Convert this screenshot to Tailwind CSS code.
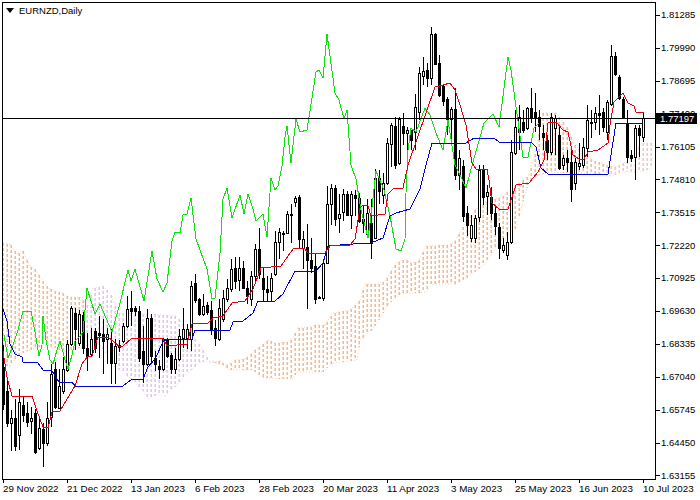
<!DOCTYPE html>
<html lang="en">
<head>
  <meta charset="UTF-8">
  <title>EURNZD, Daily</title>
  <script src="https://cdn.jsdelivr.net/npm/@tailwindcss/browser@4"></script>
</head>
<body class="bg-white">
  <div class="w-[700px] h-[500px] overflow-hidden bg-white text-black text-[9.5px] font-['Liberation_Sans',sans-serif]">
    <div class="flex pl-[2px] pt-[2px]">
      <!-- chart pane -->
      <div class="relative w-[654px] h-[478px] border border-black">
        <svg id="chart" class="block" width="652" height="476" viewBox="3 3 652 476"></svg>
        <div class="absolute left-[3px] top-[2px] flex items-center gap-[5px]">
          <span class="w-0 h-0 border-x-[4px] border-x-transparent border-t-[5px] border-t-black"></span>
          <span class="leading-[11px]">EURNZD,Daily</span>
        </div>
      </div>
      <!-- price axis -->
      <div class="relative w-[44px] h-[478px]">
        <div id="prices" class="flex flex-col mt-[-3px]"></div>
        <div class="absolute left-0 top-[111px] w-[41px] h-[11px] bg-black text-white pl-[4px] leading-[11px]">1.77197</div>
      </div>
    </div>
    <!-- date axis -->
    <div id="dates" class="flex pl-[3px] text-[9.8px]"></div>
  </div>

  <script>
    // candles: [x, high, bodyTop, bodyBottom, low, black]
    const candles = [
      [3,345,367,404,410,1],[7,380,391,423,427,1],[11,410,418,423,451,0],[15,399,418,446,451,1],[19,389,402,435,450,0],
      [23,396,405,415,422,1],[27,402,413,422,427,1],[31,407,418,421,434,0],[35,409,413,452,454,1],[39,418,428,448,450,0],
      [43,423,429,443,467,1],[47,402,418,443,446,0],[51,364,374,417,427,0],[55,362,369,407,409,1],[59,369,386,408,409,0],
      [63,357,369,391,394,0],[67,340,344,370,372,0],[71,306,308,344,346,0],[75,308,313,329,350,1],[79,310,314,343,346,0],
      [83,312,315,348,354,1],[87,333,348,356,371,1],[91,328,339,354,356,0],[95,328,331,348,353,1],[99,316,333,335,358,1],
      [103,319,334,341,374,1],[107,328,334,339,364,0],[111,329,343,363,384,1],[115,339,346,363,384,0],[119,340,345,347,352,0],
      [123,323,326,341,343,0],[127,296,309,326,328,0],[131,291,308,311,326,1],[135,306,308,311,316,1],[139,306,311,358,362,1],
      [143,326,351,364,383,1],[147,309,318,364,366,0],[151,314,318,356,362,1],[155,351,358,364,371,1],[159,360,366,369,379,1],
      [163,338,339,369,371,0],[167,338,339,356,358,1],[171,353,355,369,374,1],[175,348,359,369,374,0],[179,329,336,359,361,0],
      [183,308,329,338,348,0],[187,324,329,338,349,0],[191,281,286,339,351,0],[195,274,283,300,303,1],[199,298,299,314,316,1],
      [203,294,306,314,316,0],[207,302,305,312,315,1],[211,301,310,329,335,1],[215,320,328,338,346,1],[219,299,308,339,341,0],
      [223,290,298,319,322,0],[227,279,288,299,302,0],[231,259,269,289,292,0],[235,257,268,281,289,1],[239,257,268,280,291,0],
      [243,261,268,288,289,1],[247,281,288,296,304,1],[251,271,276,299,306,0],[255,244,249,276,281,0],[259,228,249,274,279,1],
      [263,268,278,289,301,1],[267,276,289,292,301,1],[271,273,278,291,301,0],[275,231,242,274,276,0],[279,228,232,242,259,0],
      [283,231,233,234,251,1],[287,211,214,233,234,0],[291,204,214,215,243,0],[295,196,198,202,207,0],[299,195,197,239,248,1],
      [303,231,239,248,269,0],[307,224,247,260,309,1],[311,238,260,268,273,1],[315,254,266,299,304,1],[319,296,297,298,299,1],
      [323,259,263,298,301,0],[327,186,204,263,264,0],[331,184,188,204,225,0],[335,185,188,219,226,1],[339,194,214,218,233,0],
      [343,189,194,212,221,0],[347,191,194,215,216,1],[351,191,194,215,229,0],[355,190,195,198,216,1],[359,193,198,221,223,1],
      [363,205,219,223,233,1],[367,199,213,234,238,0],[371,199,223,243,259,1],[375,169,178,238,239,0],[379,170,178,191,204,1],
      [383,173,183,195,204,0],[387,138,143,183,185,0],[391,123,125,144,167,0],[395,117,126,165,169,1],[399,117,119,163,165,0],
      [403,113,126,133,145,1],[407,127,130,133,165,0],[411,130,130,140,150,1],[415,94,107,132,150,0],[419,67,73,112,120,0],
      [423,57,71,76,85,0],[427,63,70,78,87,1],[431,27,34,78,85,0],[435,33,34,64,65,1],[439,55,63,95,97,1],
      [443,85,86,101,106,1],[447,97,99,119,135,1],[451,107,109,119,140,0],[455,88,109,175,180,1],[459,150,158,175,190,0],
      [463,160,166,216,222,1],[467,206,213,225,236,1],[471,215,225,238,242,0],[475,215,218,238,243,0],[479,165,170,217,222,0],
      [483,165,170,197,205,1],[487,185,192,196,215,0],[491,187,197,213,220,1],[495,205,213,226,235,1],[499,223,227,248,259,1],
      [503,238,245,250,253,0],[507,232,242,255,260,0],[511,140,152,242,244,0],[515,110,127,153,155,0],[519,105,117,132,150,0],
      [523,110,122,130,133,1],[527,107,108,128,130,0],[531,88,108,118,123,1],[535,93,112,117,132,1],[539,110,117,126,140,1],
      [543,125,133,137,150,1],[547,135,140,152,160,1],[551,113,117,152,155,0],[555,115,118,128,155,0],[559,125,135,168,170,1],
      [563,155,158,165,170,0],[567,150,158,162,172,1],[571,150,162,189,202,1],[575,158,162,183,190,0],[579,143,163,166,170,0],
      [583,138,147,165,168,0],[587,105,120,148,157,0],[591,110,122,123,138,0],[595,107,113,122,130,0],[599,95,113,115,135,1],
      [603,108,112,127,132,1],[607,100,102,132,140,0],[611,45,56,104,106,0],[615,52,56,74,76,1],[619,75,77,98,100,1],
      [623,97,99,117,119,1],[627,110,123,157,163,1],[631,150,155,158,162,1],[635,125,128,157,180,0],[639,125,128,135,157,1],
      [643,112,118,137,142,0]
    ];

    const green = [[4,335],[8,358],[12,348],[18,330],[23,311],[31,311],[35,332],[39,356],[42,345],[43,316],[46,340],[50,360],[53,364],[57,350],[60,341],[65,360],[68,369],[72,355],[75,341],[80,336],[83,332],[87,288],[95,314],[100,304],[112,332],[120,303],[128,270],[131,281],[135,269],[144,301],[152,251],[157,279],[163,292],[167,283],[172,241],[175,232],[180,233],[183,215],[187,214],[191,198],[196,239],[207,269],[212,299],[215,298],[220,253],[223,199],[227,188],[232,218],[240,195],[244,214],[248,194],[253,209],[256,221],[263,214],[267,237],[271,178],[275,190],[278,186],[282,166],[285,137],[287,126],[291,163],[296,119],[300,132],[307,130],[316,72],[319,70],[323,78],[327,34],[335,93],[339,100],[344,119],[347,110],[351,165],[356,179],[361,210],[368,238],[371,216],[376,171],[384,190],[390,216],[396,249],[401,251],[405,239],[406,193],[408,150],[411,128],[416,132],[425,108],[430,115],[436,133],[443,150],[448,120],[455,165],[460,175],[466,188],[473,162],[484,123],[493,114],[499,127],[508,57],[511,70],[516,107],[523,157],[528,157],[534,128],[539,123]];

    const red = [[3,351],[7,377],[12,396],[32,396],[37,411],[43,427],[48,428],[52,412],[60,411],[75,386],[82,364],[87,357],[92,356],[98,337],[108,337],[120,347],[123,346],[132,338],[163,339],[167,346],[187,344],[192,324],[208,323],[213,318],[223,316],[232,303],[245,301],[253,289],[261,268],[281,266],[293,249],[298,248],[305,249],[308,253],[325,253],[330,246],[350,245],[355,239],[360,208],[363,205],[368,206],[371,216],[385,214],[388,194],[393,189],[403,188],[408,165],[426,113],[435,87],[443,85],[450,83],[455,90],[460,105],[466,125],[472,163],[476,169],[487,169],[489,180],[492,203],[499,209],[508,209],[516,185],[529,183],[538,172],[544,160],[548,123],[556,122],[563,130],[568,132],[573,155],[579,159],[584,159],[588,152],[598,150],[608,143],[610,125],[614,102],[623,93],[628,103],[634,106],[636,112],[644,113]];

    const blue = [[3,309],[7,321],[10,344],[15,354],[22,357],[23,362],[38,363],[43,370],[52,371],[59,382],[72,382],[75,386],[123,386],[132,379],[143,379],[148,367],[155,359],[163,342],[167,339],[192,339],[195,330],[230,330],[233,322],[243,321],[253,313],[258,301],[275,301],[283,294],[295,271],[316,271],[323,263],[328,246],[353,244],[371,243],[383,238],[390,216],[396,213],[410,209],[420,189],[426,165],[432,143],[466,143],[474,138],[494,138],[499,142],[531,142],[536,147],[541,168],[548,174],[608,174],[616,123],[643,123]];

    const cloudTop = [[3,243],[10,244],[17,254],[23,251],[30,266],[35,269],[45,284],[50,289],[63,293],[68,297],[80,297],[88,306],[93,288],[103,286],[112,296],[117,313],[148,314],[177,316],[187,329],[200,345],[210,362],[220,361],[227,365],[235,360],[245,359],[255,350],[268,340],[275,343],[290,342],[298,328],[310,327],[315,325],[325,325],[333,313],[350,310],[360,300],[365,284],[380,284],[385,281],[396,263],[406,259],[410,263],[418,262],[426,246],[450,245],[455,241],[465,223],[475,210],[490,200],[500,198],[516,185],[529,175],[536,150],[543,113],[556,113],[568,128],[573,143],[585,155],[593,160],[606,165],[616,167],[633,158],[641,143],[652,143]];
    const cloudBottom = [[3,365],[10,366],[18,355],[30,350],[45,345],[60,350],[75,350],[88,345],[100,345],[115,367],[130,378],[143,391],[148,399],[158,394],[165,396],[180,382],[190,371],[200,362],[213,362],[223,365],[230,370],[253,370],[263,378],[292,379],[297,372],[323,372],[333,363],[357,360],[360,340],[372,330],[380,318],[388,304],[400,294],[426,292],[433,284],[455,284],[465,279],[475,272],[486,263],[499,243],[516,228],[526,190],[534,177],[548,172],[600,174],[610,176],[625,172],[640,172],[652,168]];

    function yAt(points, x) {
      for (let i = 1; i < points.length; i++) {
        if (x <= points[i][0]) {
          const [x0, y0] = points[i - 1];
          const [x1, y1] = points[i];
          return y0 + (y1 - y0) * (x - x0) / (x1 - x0);
        }
      }
      return points[points.length - 1][1];
    }

    function polyline(points, color, extra = '') {
      const pts = points.map(p => p.join(',')).join(' ');
      return `<polyline points="${pts}" fill="none" stroke="${color}" stroke-width="1" ${extra}/>`;
    }

    function cloudColor(x) {
      if (x > 86 && x < 210) return '#dcc4e4';
      if (x > 606) return '#eec4c4';
      return '#f2b488';
    }

    let svg = '';

    // cloud hatching, one dashed column per bar, a bit over a pixel wide so the tint survives the photograph
    for (let x = 3; x <= 652; x += 4) {
      const top = Math.round(yAt(cloudTop, x));
      const bottom = Math.round(yAt(cloudBottom, x));
      svg += `<line x1="${x + 0.2}" x2="${x + 0.2}" y1="${top}" y2="${bottom}" stroke="${cloudColor(x)}" stroke-width="1.4" stroke-dasharray="3 2"/>`;
    }
    [cloudTop, cloudBottom].forEach(edge => {
      for (let i = 1; i < edge.length; i++) {
        const seg = [edge[i - 1], edge[i]];
        svg += polyline(seg, cloudColor(seg[0][0]), 'stroke-dasharray="1 2" stroke-opacity="0.6"');
      }
    });

    candles.forEach(([x, high, top, bottom, low, black]) => {
      svg += `<line x1="${x + 0.5}" x2="${x + 0.5}" y1="${high}" y2="${low}" stroke="#000"/>`;
      svg += `<rect x="${x - 0.5}" y="${top + 0.5}" width="2" height="${Math.max(bottom - top, 1)}" fill="${black ? '#000' : '#fff'}" stroke="#000"/>`;
    });

    svg += polyline(green, '#10e010', 'shape-rendering="crispEdges"');
    svg += polyline(blue, '#0000d8', 'shape-rendering="crispEdges"');
    svg += polyline(red, '#e00010', 'shape-rendering="crispEdges"');
    svg += '<line x1="3" x2="655" y1="118.5" y2="118.5" stroke="#000"/>';
    document.getElementById('chart').innerHTML = svg;

    const prices = ['1.81285', '1.79990', '1.78695', '1.77400', '1.76105', '1.74810', '1.73515', '1.72220', '1.70925', '1.69630', '1.68335', '1.67040', '1.65745', '1.64450', '1.63155'];
    document.getElementById('prices').innerHTML = prices.map(p =>
      `<div class="flex items-center shrink-0 h-[32.9px]"><span class="w-[4px] h-px bg-black"></span><span class="ml-[1px]">${p}</span></div>`
    ).join('');

    const dates = ['29 Nov 2022', '21 Dec 2022', '13 Jan 2023', '6 Feb 2023', '28 Feb 2023', '20 Mar 2023', '11 Apr 2023', '3 May 2023', '25 May 2023', '16 Jun 2023', '10 Jul 2023'];
    document.getElementById('dates').innerHTML = dates.map(d =>
      `<div class="w-[64px] shrink-0"><div class="w-px h-[3px] bg-black"></div><div class="leading-[12px] whitespace-nowrap">${d}</div></div>`
    ).join('');
  </script>
</body>
</html>
